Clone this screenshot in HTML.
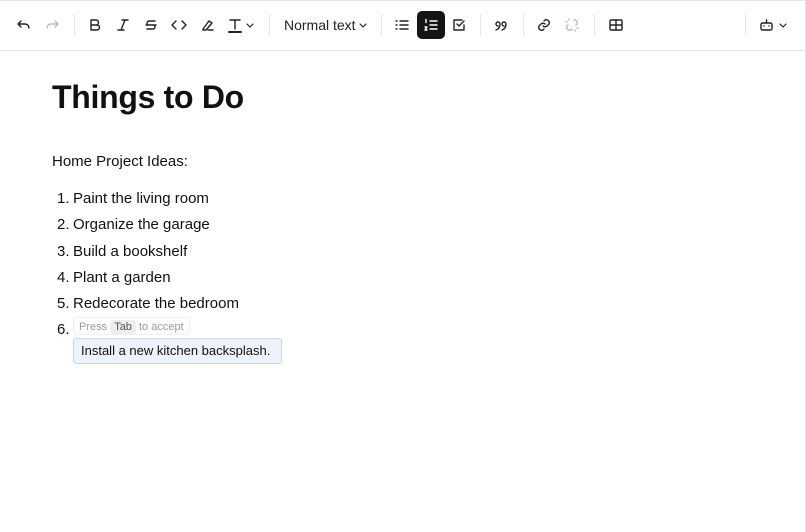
<!DOCTYPE html>
<html><head><meta charset="utf-8"><style>
*{margin:0;padding:0;box-sizing:border-box}
body{width:806px;height:532px;background:#fff;font-family:"Liberation Sans",sans-serif;color:#111;position:relative;overflow:hidden}
.frame{position:absolute;left:0;top:0;width:806px;height:532px;border-top:1px solid #e6e6e6;border-right:1px solid #e6e6e6}
.tb{position:absolute;left:0;top:0;width:806px;height:51px;border-bottom:1px solid #e5e5e5}
.ic{position:absolute;top:17px;width:16px;height:16px}
.dv{position:absolute;top:14px;width:1px;height:22px;background:#e8e8e8}
svg{stroke:#222;fill:none;stroke-width:1.4;stroke-linecap:round;stroke-linejoin:round}
.t{position:absolute;white-space:nowrap}
h1{position:absolute;left:52px;top:79px;font-size:32px;font-weight:bold;letter-spacing:-0.3px;white-space:nowrap}
.li{position:absolute;left:57px;font-size:15px;white-space:nowrap}
.li span{position:absolute;left:16px;top:0;white-space:nowrap}
</style></head><body>
<div class="frame"></div>
<div class="tb">
<svg class="ic" style="left:16px" viewBox="0 0 16 16"><path d="M5 4L2 7l3 3M2 7h7a4 4 0 0 1 4 4"/></svg>
<svg class="ic" style="left:44px;stroke:#bbb" viewBox="0 0 16 16"><path d="M11 4l3 3-3 3M14 7H7a4 4 0 0 0-4 4"/></svg>
<div class="dv" style="left:74px"></div>
<svg class="ic" style="left:87px" viewBox="0 0 16 16"><path d="M4 3h5a2.5 2.5 0 0 1 0 5H4zM4 8h6a2.5 2.5 0 0 1 0 5H4z"/></svg>
<svg class="ic" style="left:115px" viewBox="0 0 16 16"><path d="M7 3h6M3 13h6M10 3L6 13"/></svg>
<svg class="ic" style="left:143px" viewBox="0 0 16 16"><path d="M12 4H6a2 2 0 0 0 0 4h4a2 2 0 0 1 0 4H4M3 8h10"/></svg>
<svg class="ic" style="left:171px" viewBox="0 0 16 16"><path d="M5 4L1 8l4 4M11 4l4 4-4 4"/></svg>
<svg class="ic" style="left:199px" viewBox="0 0 16 16"><path d="M4 12l6-8 3 2-6 7H4zM9 13h5"/></svg>
<svg class="ic" style="left:227px" viewBox="0 0 16 16"><path d="M3 3h10M8 3v9"/><path d="M2 15h12" stroke-width="2"/></svg>
<svg class="ic" style="left:246px;width:8px;stroke-width:1.2" viewBox="0 0 8 16"><path d="M1 7l3 3 3-3"/></svg>
<div class="dv" style="left:269px"></div>
<div class="t" style="left:284px;top:17px;font-size:14px;color:#222">Normal text</div>
<svg class="ic" style="left:359px;width:8px;stroke-width:1.2" viewBox="0 0 8 16"><path d="M1 7l3 3 3-3"/></svg>
<div class="dv" style="left:381px"></div>
<svg class="ic" style="left:394px" viewBox="0 0 16 16"><path d="M6 4h8M6 8h8M6 12h8M2 4h1M2 8h1M2 12h1"/></svg>
<div style="position:absolute;left:417px;top:11px;width:28px;height:28px;background:#141414;border-radius:5px"></div>
<svg class="ic" style="left:423px;stroke:#fff" viewBox="0 0 16 16"><path d="M7 4h7M7 8h7M7 12h7M3 2.5v3M2 10h2l-2 3h2"/></svg>
<svg class="ic" style="left:451px" viewBox="0 0 16 16"><path d="M13 8v5H3V3h8M6 7l2 2 5-5"/></svg>
<div class="dv" style="left:480px"></div>
<svg class="ic" style="left:493px" viewBox="0 0 16 16"><path d="M3 13c3-1 4-3 4-6a2 2 0 1 0-2 2M9 13c3-1 4-3 4-6a2 2 0 1 0-2 2"/></svg>
<div class="dv" style="left:523px"></div>
<svg class="ic" style="left:536px" viewBox="0 0 16 16"><path d="M7 9a3 3 0 0 0 4 0l2-2a3 3 0 0 0-4-4l-1 1M9 7a3 3 0 0 0-4 0l-2 2a3 3 0 0 0 4 4l1-1"/></svg>
<svg class="ic" style="left:564px;stroke:#bbb" viewBox="0 0 16 16"><path d="M10 3l1 0a3 3 0 0 1 2 4l-1 1M4 8l-1 1a3 3 0 0 0 4 4l1-1M3 5h-1M5 2v1M13 11h1M11 13v1"/></svg>
<div class="dv" style="left:594px"></div>
<svg class="ic" style="left:608px" viewBox="0 0 16 16"><rect x="2" y="3" width="12" height="10" rx="1"/><path d="M2 8h12M8 3v10"/></svg>
<div class="dv" style="left:745px"></div>
<svg class="ic" style="left:758px" viewBox="0 0 16 16"><rect x="3" y="6" width="11" height="7" rx="1.5"/><path d="M8.5 3v3M6 9h.1M11 9h.1"/></svg>
<svg class="ic" style="left:779px;width:8px;stroke-width:1.2" viewBox="0 0 8 16"><path d="M1 7l3 3 3-3"/></svg>
</div>
<h1>Things to Do</h1>
<div class="t" style="left:52px;top:153px;font-size:15px">Home Project Ideas:</div>
<div class="li" style="top:190px">1.<span>Paint the living room</span></div>
<div class="li" style="top:216px">2.<span>Organize the garage</span></div>
<div class="li" style="top:243px">3.<span>Build a bookshelf</span></div>
<div class="li" style="top:269px">4.<span>Plant a garden</span></div>
<div class="li" style="top:295px">5.<span>Redecorate the bedroom</span></div>
<div class="li" style="top:321px">6.</div>
<div class="t" style="left:73px;top:317px;height:18px;padding:0 5px;font-size:11px;line-height:18px;color:#999;border:1px solid #f0f0f0;border-radius:3px">Press <span style="background:#eee;color:#555;padding:1px 4px;border-radius:3px">Tab</span> to accept</div>
<div class="t" style="left:73px;top:338px;width:209px;height:26px;font-size:13px;line-height:24px;padding-left:7px;background:#eef2fa;border:1px solid #cfd6e2;border-radius:3px;color:#111">Install a new kitchen backsplash.</div>
</body></html>
